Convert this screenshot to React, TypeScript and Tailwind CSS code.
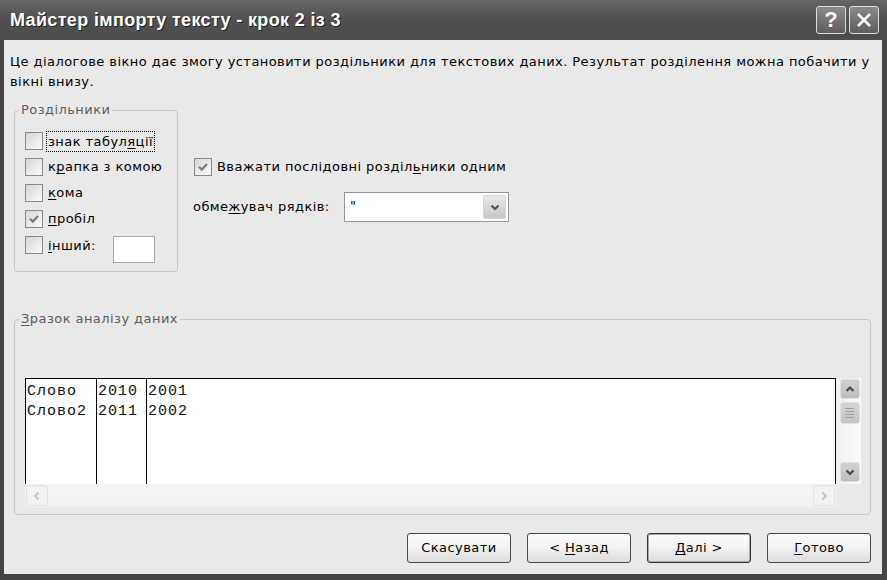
import React from "react";

const UI = "font-['DejaVu_Sans',sans-serif] tracking-[0.44px]";

function Check({ checked }: { checked?: boolean }) {
  return (
    <div className="w-[18px] h-[18px] shrink-0 border border-[#8a8a8a] bg-gradient-to-br from-[#d6d6d6] to-[#fbfbfb] flex items-center justify-center">
      {checked && (
        <svg width="12" height="12" viewBox="0 0 12 12">
          <path d="M2 5.8 L4.8 8.6 L10 3" stroke="#7a7a7a" strokeWidth="2.2" fill="none" />
        </svg>
      )}
    </div>
  );
}

function Chevron({ dir, color = "#4a4a4a", w = 2.2 }: { dir: "up" | "down" | "left" | "right"; color?: string; w?: number }) {
  const d =
    dir === "up"
      ? "M2.5 8 L6 4.5 L9.5 8"
      : dir === "down"
      ? "M2.5 4.5 L6 8 L9.5 4.5"
      : dir === "left"
      ? "M7.5 2.5 L4 6 L7.5 9.5"
      : "M4.5 2.5 L8 6 L4.5 9.5";
  return (
    <svg width="12" height="12" viewBox="0 0 12 12">
      <path d={d} stroke={color} strokeWidth={w} fill="none" />
    </svg>
  );
}

function Btn({ children, def }: { children: React.ReactNode; def?: boolean }) {
  return (
    <div
      className={
        "w-[104px] h-[30px] rounded-[3px] border bg-gradient-to-b from-[#fdfdfd] via-[#f2f2f2] to-[#dcdcdc] flex items-center justify-center text-[13px] text-black whitespace-pre " +
        (def ? "border-[#333333] shadow-[inset_0_0_0_1px_#a8a8a8]" : "border-[#4a4a4a]")
      }
    >
      {children}
    </div>
  );
}

export default function App() {
  return (
    <div className={"w-[887px] h-[580px] bg-[#454545] flex flex-col overflow-hidden " + UI}>
      {/* Title bar */}
      <div className="h-[40px] shrink-0 flex items-center justify-between pl-[10px] pr-[8px] bg-gradient-to-b from-[#666666] via-[#505050] to-[#4c4c4c]">
        <div className="text-white font-bold text-[18px] tracking-[0.35px] font-['Liberation_Sans',sans-serif] [text-shadow:1px_1px_0_#222]">
          Майстер імпорту тексту - крок 2 із 3
        </div>
        <div className="flex gap-[3px] tracking-normal">
          <div className="w-[30px] h-[28px] rounded-[3px] border border-[#dcdcdc] bg-gradient-to-b from-[#8a8a8a] to-[#5e5e5e] flex items-center justify-center text-white font-bold text-[22px] leading-none font-['Liberation_Sans',sans-serif]">
            ?
          </div>
          <div className="w-[30px] h-[28px] rounded-[3px] border border-[#dcdcdc] bg-gradient-to-b from-[#8a8a8a] to-[#5e5e5e] flex items-center justify-center">
            <svg width="18" height="18" viewBox="0 0 18 18">
              <path d="M3 3 L15 15 M15 3 L3 15" stroke="white" strokeWidth="2.6" />
            </svg>
          </div>
        </div>
      </div>

      {/* Body */}
      <div className="flex-1 ml-[4px] mr-[5px] mb-[6px] bg-[#e9e9e9] flex flex-col text-[13px] text-black">
        <div className="pl-[6px] pt-[12px] leading-[20px]">
          <div className="whitespace-nowrap">
            Це діалогове вікно дає змогу установити роздільники для текстових даних. Результат розділення можна побачити у
          </div>
          <div className="whitespace-nowrap">вікні внизу.</div>
        </div>

        <div className="flex mt-[10px] pl-[10px]">
          <fieldset className="w-[164px] h-[170px] border border-[#c8c8c8] rounded-[4px] pl-[4px]">
            <legend className="px-[2px] text-[13px] leading-[16px] text-[#5e5e5e]">Роздільники</legend>
            <div className="ml-[6px] mt-[10px] flex flex-col">
              <div className="h-[26px] flex items-center gap-[3px]">
                <Check />
                <span className="border border-dotted border-black px-[1px] leading-[19px] whitespace-nowrap">
                  знак табул<u className="underline-offset-2">я</u>ції
                </span>
              </div>
              <div className="h-[26px] flex items-center gap-[3px]">
                <Check />
                <span className="border border-transparent px-[1px] whitespace-nowrap">
                  к<u className="underline-offset-2">р</u>апка з комою
                </span>
              </div>
              <div className="h-[26px] flex items-center gap-[3px]">
                <Check />
                <span className="border border-transparent px-[1px]">
                  <u className="underline-offset-2">к</u>ома
                </span>
              </div>
              <div className="h-[26px] flex items-center gap-[3px]">
                <Check checked />
                <span className="border border-transparent px-[1px]">
                  <u className="underline-offset-2">п</u>робіл
                </span>
              </div>
              <div className="h-[26px] flex items-start pt-[4px] gap-[3px]">
                <Check />
                <span className="w-[64px] border border-transparent px-[1px] leading-[18px]">
                  <u className="underline-offset-2">і</u>нший:
                </span>
                <div className="w-[42px] h-[27px] bg-white border border-[#a8a8a8] shrink-0" />
              </div>
            </div>
          </fieldset>

          <div className="ml-[15px] pt-[55px] flex flex-col">
            <div className="h-[20px] flex items-center gap-[5px] ml-[1px]">
              <Check checked />
              <span className="whitespace-nowrap">
                Вважати послідовні розділ<u className="underline-offset-2">ь</u>ники одним
              </span>
            </div>
            <div className="mt-[15px] flex items-center">
              <span className="w-[151px] whitespace-nowrap">
                обме<u className="underline-offset-2">ж</u>увач рядків:
              </span>
              <div className="w-[165px] h-[30px] border border-[#979797] bg-white flex items-center justify-between pl-[5px] pr-[2px]">
                <span className="self-start pt-[3px]">"</span>
                <div className="w-[23px] h-[24px] rounded-[2px] border border-[#d4d4d4] bg-gradient-to-b from-[#e8e8e8] to-[#c6c6c6] flex items-center justify-center">
                  <Chevron dir="down" color="#555555" />
                </div>
              </div>
            </div>
          </div>
        </div>

        <fieldset className="mt-[39px] ml-[10px] w-[857px] h-[204px] border border-[#c8c8c8] rounded-[4px] pl-[4px]">
          <legend className="px-[2px] text-[13px] leading-[16px] text-[#5e5e5e]">
            <u className="underline-offset-2">З</u>разок аналізу даних
          </legend>
          <div className="ml-[6px] mt-[51px] w-[836px] flex flex-col">
            <div className="flex h-[106px]">
              <div className="w-[811px] h-[106px] bg-white border-t border-r border-black flex items-start font-['Liberation_Mono',monospace] text-[15px] tracking-[1px] leading-[20px] text-[#111]">
                <div className="w-[71px] h-[105px] border-l border-black pt-[3px] pl-[1px]">
                  <div>Слово</div>
                  <div>Слово2</div>
                </div>
                <div className="w-[50px] h-[105px] border-l border-black pt-[3px] pl-[1px]">
                  <div>2010</div>
                  <div>2011</div>
                </div>
                <div className="flex-1 h-[105px] border-l border-black pt-[3px] pl-[1px]">
                  <div>2001</div>
                  <div>2002</div>
                </div>
              </div>
              <div className="w-[25px] h-[106px] bg-gradient-to-r from-[#f0f0f0] to-[#fafafa] flex flex-col items-center pt-[1px] pl-[2px]">
                <div className="w-[20px] h-[20px] rounded-[3px] bg-gradient-to-b from-[#d2d2d2] to-[#bdbdbd] border border-[#e0e0e0] flex items-center justify-center">
                  <Chevron dir="up" />
                </div>
                <div className="mt-[3px] w-[20px] h-[22px] rounded-[3px] bg-gradient-to-b from-[#d6d6d6] to-[#c4c4c4] border border-[#e0e0e0] flex flex-col items-center justify-center gap-[2px]">
                  <div className="w-[9px] h-px bg-[#a0a0a0]" />
                  <div className="w-[9px] h-px bg-[#a0a0a0]" />
                  <div className="w-[9px] h-px bg-[#a0a0a0]" />
                  <div className="w-[9px] h-px bg-[#a0a0a0]" />
                </div>
                <div className="flex-1" />
                <div className="mb-[2px] w-[20px] h-[20px] rounded-[3px] bg-gradient-to-b from-[#d2d2d2] to-[#bdbdbd] border border-[#e0e0e0] flex items-center justify-center">
                  <Chevron dir="down" />
                </div>
              </div>
            </div>
            <div className="flex h-[23px]">
              <div className="w-[811px] h-[23px] bg-gradient-to-b from-[#f6f6f6] to-[#f0f0f0] flex items-center justify-between px-[1px]">
                <div className="w-[22px] h-[21px] rounded-[3px] border border-[#e2e2e2] bg-[#f2f2f2] flex items-center justify-center">
                  <Chevron dir="left" color="#c4c4c4" w={1.8} />
                </div>
                <div className="w-[22px] h-[21px] rounded-[3px] border border-[#e2e2e2] bg-[#f2f2f2] flex items-center justify-center">
                  <Chevron dir="right" color="#c4c4c4" w={1.8} />
                </div>
              </div>
            </div>
          </div>
        </fieldset>

        <div className="mt-[18px] flex justify-end gap-[16px] pr-[11px]">
          <Btn>Скасувати</Btn>
          <Btn>
            {"< "}
            <u className="underline-offset-2">Н</u>азад
          </Btn>
          <Btn def>
            <u className="underline-offset-2">Д</u>
            {"алі >"}
          </Btn>
          <Btn>
            <u className="underline-offset-2">Г</u>отово
          </Btn>
        </div>
      </div>
    </div>
  );
}
